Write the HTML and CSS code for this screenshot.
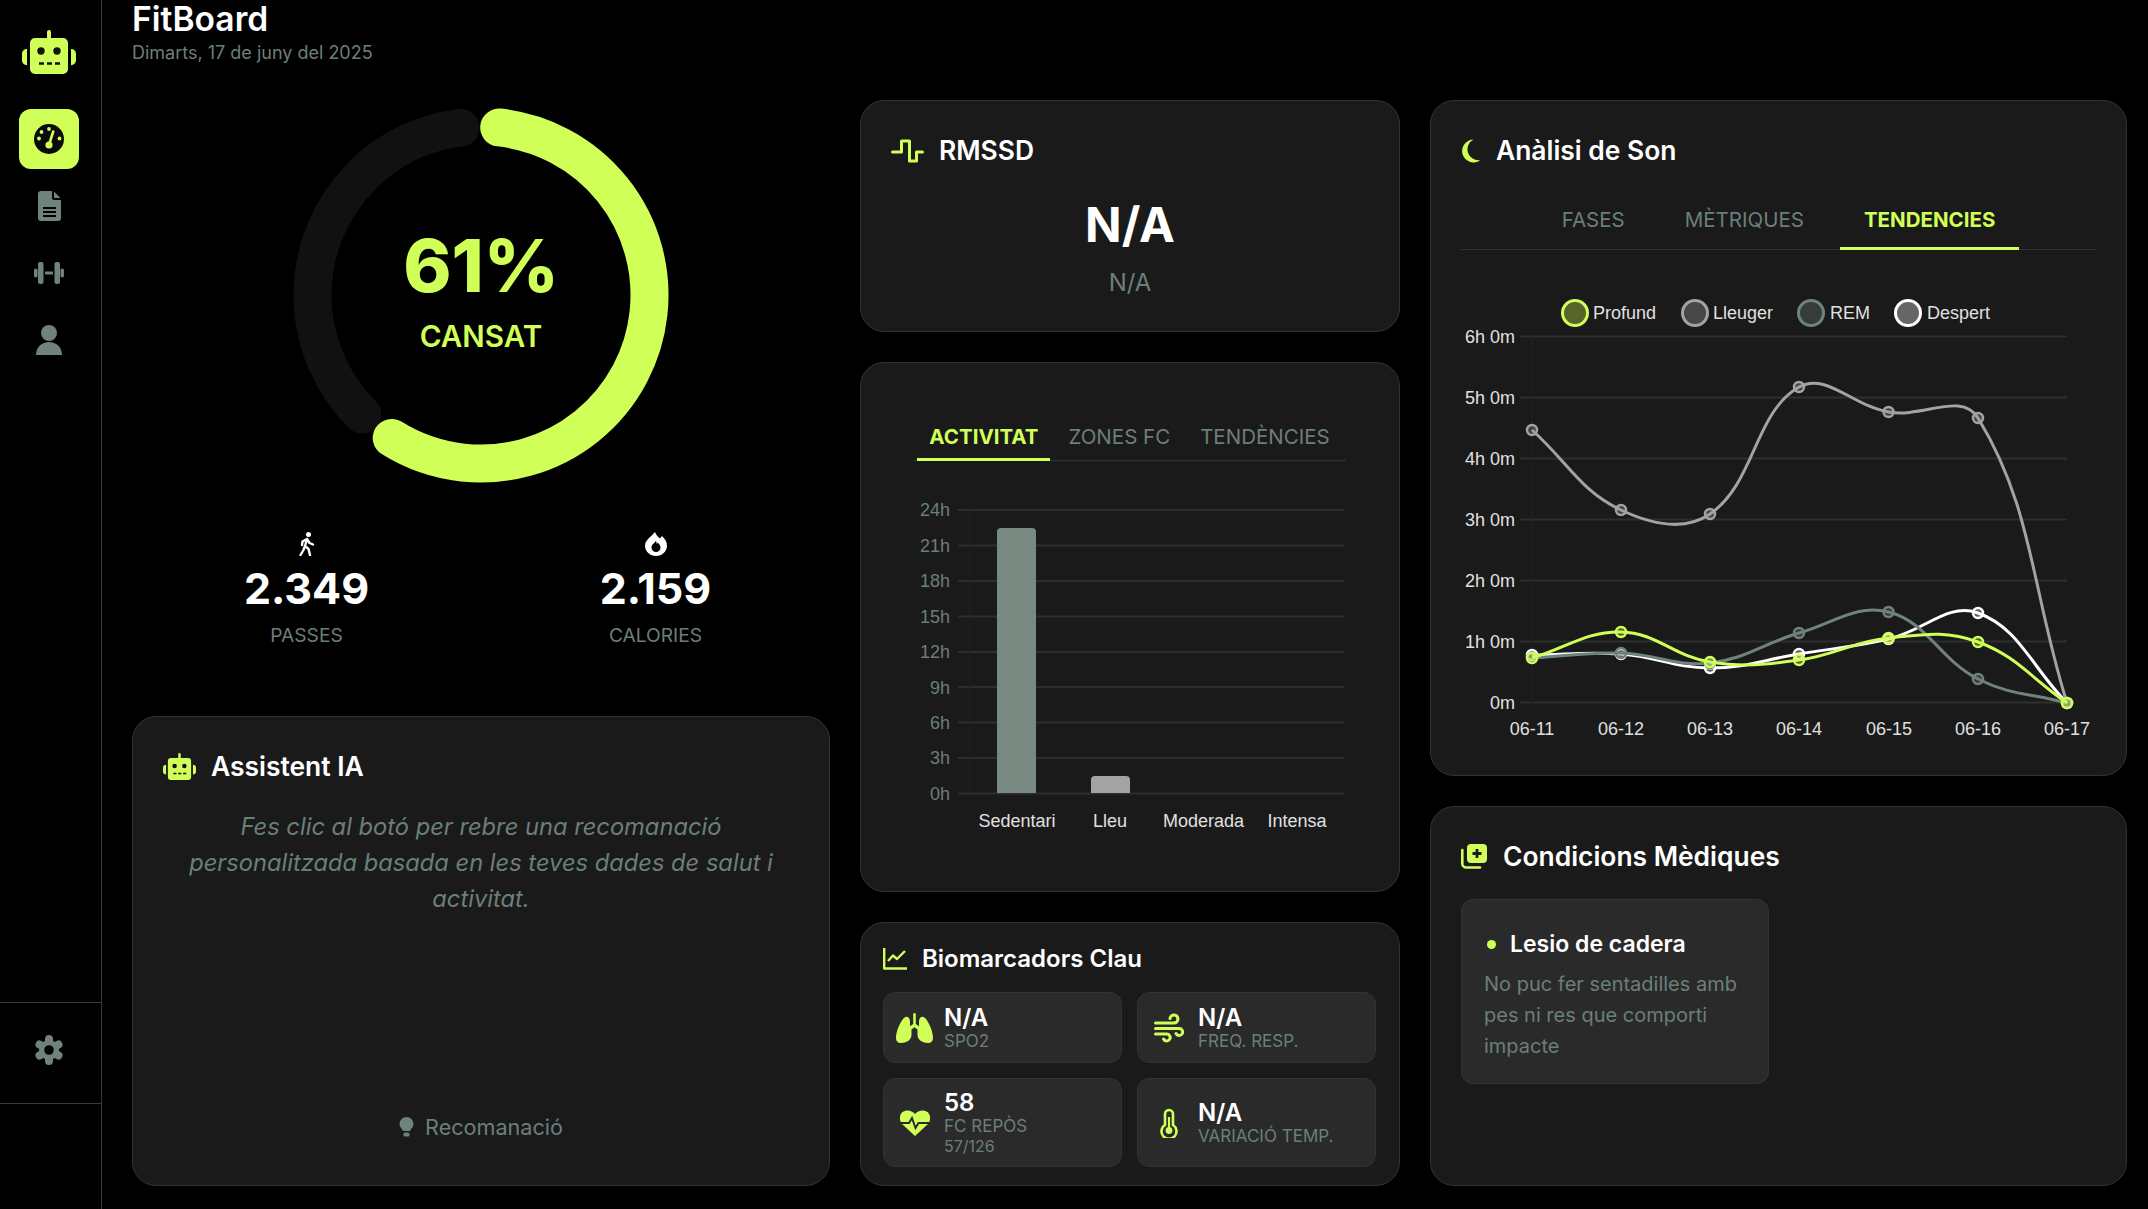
FILE: index.html
```html
<!DOCTYPE html>
<html lang="ca">
<head>
<meta charset="utf-8">
<title>FitBoard</title>
<link rel="stylesheet" href="styles.css">
</head>
<body>
<div class="app">
  <aside class="sidebar">
    <div class="logo">
      <svg class="ico-logo" viewBox="0 0 54 44"><use href="#i-robot"/></svg>
    </div>
    <nav class="nav">
      <a class="nav-item active">
        <svg width="30" height="30" viewBox="0 0 30 30"><circle cx="15" cy="15" r="15" fill="#0a0a0a"/><g fill="#d0ff58"><circle cx="15" cy="5" r="1.9"/><circle cx="7.5" cy="8" r="1.9"/><circle cx="5" cy="14.5" r="1.9"/><circle cx="25.5" cy="14.5" r="1.9"/><circle cx="15" cy="21" r="3.6"/></g><path d="M15 21 19.2 7.5" stroke="#d0ff58" stroke-width="2.6" stroke-linecap="round"/></svg>
      </a>
      <a class="nav-item">
        <svg width="24" height="30" viewBox="0 0 24 30"><path class="f-muted" d="M4 0H15V7A2 2 0 0 0 17 9H24V27A3 3 0 0 1 21 30H4A3 3 0 0 1 1 27V3A3 3 0 0 1 4 0Z"/><path class="f-muted" d="M17 .5 23.5 7H17Z"/><path d="M6 17H19M6 21H19M6 25H19" stroke="#000" stroke-width="2"/></svg>
      </a>
      <a class="nav-item">
        <svg width="30" height="22" viewBox="0 0 30 22"><g class="f-muted"><rect x="0" y="6.5" width="3.5" height="9" rx="1.7"/><rect x="4" y="0" width="5.5" height="22" rx="2"/><rect x="20.500" y="0" width="5.5" height="22" rx="2"/><rect x="26.500" y="6.500" width="3.500" height="9" rx="1.700"/><rect x="11" y="9.500" width="8" height="3"/></g></svg>
      </a>
      <a class="nav-item">
        <svg width="26" height="30" viewBox="0 0 26 30"><g class="f-muted"><circle cx="13" cy="8" r="8"/><path d="M0 30C0 22 6 17 13 17S26 22 26 30Z"/></g></svg>
      </a>
    </nav>
    <div class="side-foot">
      <svg width="30" height="30" viewBox="0 0 30 30"><g stroke="#6f827c" stroke-width="8" stroke-linecap="round"><path d="M15 4V26M5.500 9.500 24.500 20.500M24.500 9.500 5.500 20.500"/></g><circle cx="15" cy="15" r="10" fill="#6f827c"/><circle cx="15" cy="15" r="4.800" fill="#000"/></svg>
    </div>
  </aside>

  <main class="main">
    <header class="header">
      <h1 class="brand">FitBoard</h1>
      <p class="date">Dimarts, 17 de juny del 2025</p>
    </header>

    <div class="grid">
      <section class="col">
        <div class="summary">
          <div class="gauge">
            <svg class="gauge-svg" viewBox="0 0 376 376">
              <circle class="g-track" cx="188" cy="188" r="168.5" pathLength="360" stroke-dasharray="128.2 360" transform="rotate(134.8 188 188)"/>
              <circle class="g-value" cx="188" cy="188" r="168.5" pathLength="360" stroke-dasharray="205.8 360" transform="rotate(-83.8 188 188)"/>
            </svg>
            <div class="gauge-text">
              <div class="gauge-num">61%</div>
              <div class="gauge-label">CANSAT</div>
            </div>
          </div>
          <div class="stats">
            <div class="stat">
              <svg width="16" height="24" viewBox="0 0 16 24"><circle cx="9.500" cy="2.500" r="2.500" fill="#fff"/><path d="M8 7 6 14 9.500 17 11 23M6 14 4.500 18 1.500 23M8 7 3.500 9.500 3 13M8 7 10.500 11 14 12.500" fill="none" stroke="#fff" stroke-width="2.400" stroke-linecap="round" stroke-linejoin="round"/></svg>
              <div class="stat-num">2.349</div>
              <div class="stat-label">PASSES</div>
            </div>
            <div class="stat">
              <svg width="22" height="24" viewBox="0 0 22 24"><path fill="#fff" fill-rule="evenodd" d="M10 0C11 3 13 5 15 6.500L17 4C20 7 22 10 22 13.500 22 19.500 17 24 11 24S0 19.500 0 13.500C0 8 6 5 10 0ZM11 8.500C10 11 6.500 12 6.500 15.500A4.500 4.500 0 0 0 15.500 15.500C15.500 13 14 12.500 13 10.500L11.800 12Z"/></svg>
              <div class="stat-num">2.159</div>
              <div class="stat-label">CALORIES</div>
            </div>
          </div>
        </div>

        <div class="card card-ai">
          <h2 class="card-title">
            <svg width="33" height="27" viewBox="0 0 54 44"><use href="#i-robot"/></svg>
            Assistent IA
          </h2>
          <p class="ai-text">Fes clic al botó per rebre una recomanació personalitzada basada en les teves dades de salut i activitat.</p>
          <div class="ai-action">
            <svg width="15" height="20" viewBox="0 0 15 20"><path class="f-muted" d="M7.500 0A7 7 0 0 1 14.500 7C14.500 10 12 11.500 11 14H4C3 11.500 .5 10 .5 7A7 7 0 0 1 7.500 0Z"/><rect class="f-muted" x="4.500" y="15.500" width="6" height="4" rx="1.500"/></svg>
            <span>Recomanació</span>
          </div>
        </div>
      </section>

      <section class="col">
        <div class="card card-rmssd">
          <h2 class="card-title">
            <svg width="33" height="24" viewBox="0 0 32 24"><path d="M1 13H10V2H18V22H25V13H31" fill="none" stroke="#d0ff58" stroke-width="3" stroke-linecap="round" stroke-linejoin="round"/></svg>
            RMSSD
          </h2>
          <div class="big-val">N/A</div>
          <div class="big-sub">N/A</div>
        </div>

        <div class="card card-activity">
          <div class="tabs tabs-small">
            <span class="tab on">ACTIVITAT</span>
            <span class="tab">ZONES FC</span>
            <span class="tab">TENDÈNCIES</span>
          </div>
          <svg class="chart-bar" viewBox="891 470 478 370">
            <g class="grid-lines">
              <path d="M958 511H1344M958 546.500H1344M958 582H1344M958 617.500H1344M958 653H1344M958 688H1344M958 723.500H1344M958 759H1344M958 794.500H1344"/>
            </g>
            <path class="axis-faint" d="M970 511V794"/>
            <g class="t-muted">
              <text x="950" y="517">24h</text><text x="950" y="552.500">21h</text><text x="950" y="588">18h</text>
              <text x="950" y="623.500">15h</text><text x="950" y="659">12h</text><text x="950" y="694.500">9h</text>
              <text x="950" y="730">6h</text><text x="950" y="765">3h</text><text x="950" y="801">0h</text>
            </g>
            <path fill="#778980" d="M997 794V533A4 4 0 0 1 1001 529H1032A4 4 0 0 1 1036 533V794Z"/>
            <path fill="#a3a3a3" d="M1091 794V781A4 4 0 0 1 1095 777H1126A4 4 0 0 1 1130 781V794Z"/>
            <g class="t-light t-mid">
              <text x="1017" y="828">Sedentari</text><text x="1110" y="828">Lleu</text>
              <text x="1203.500" y="828">Moderada</text><text x="1297" y="828">Intensa</text>
            </g>
          </svg>
        </div>

        <div class="card card-bio">
          <h2 class="card-title title-bio">
            <svg width="24" height="22" viewBox="0 0 24 22"><path d="M1.200 0V20.500H24M5 13 10 7.500 14 11 22 3" fill="none" stroke="#d0ff58" stroke-width="2.400" stroke-linejoin="round"/></svg>
            Biomarcadors Clau
          </h2>
          <div class="bio-grid">
            <div class="bio">
              <span class="bio-ico"><svg width="37" height="30" viewBox="0 0 37 30"><path fill="#d0ff58" d="M18.500 0C19.300 0 19.800 .6 19.800 1.300V11L23 13.300V8.500C23 4.500 26 2.500 28.500 4.500 32.500 8 37 18 37 25 37 28 35 30 32 30 27 30 21.500 27 21.500 22V16.500L18.500 14.300 15.500 16.500V22C15.500 27 10 30 5 30 2 30 0 28 0 25 0 18 4.500 8 8.500 4.500 11 2.500 14 4.500 14 8.500V13.300L17.200 11V1.300C17.200 .6 17.700 0 18.500 0Z"/></svg></span>
              <div class="bio-text"><div class="bio-val">N/A</div><div class="bio-lab">SPO2</div></div>
            </div>
            <div class="bio">
              <span class="bio-ico"><svg width="30" height="30" viewBox="0 0 30 30"><path d="M1.500 10H20A4 4 0 1 0 16 5.500M1.500 15.500H25.500A3.500 3.500 0 1 1 22 20.500M1.500 21H13A3.500 3.500 0 1 1 9.500 26" fill="none" stroke="#d0ff58" stroke-width="3" stroke-linecap="round"/></svg></span>
              <div class="bio-text"><div class="bio-val">N/A</div><div class="bio-lab">FREQ. RESP.</div></div>
            </div>
            <div class="bio">
              <span class="bio-ico"><svg width="30" height="26" viewBox="0 0 30 26"><path fill="#d0ff58" d="M15 26 2 14C-1.500 10-.5 4 3 1.800 7-.8 12 .5 15 4 18 .5 23-.8 27 1.800 30.500 4 31.500 10 28 14Z"/><path d="M0 13H9L12 8 15.500 18 18.500 13H30" fill="none" stroke="#2a2a2a" stroke-width="2"/></svg></span>
              <div class="bio-text"><div class="bio-val">58</div><div class="bio-lab">FC REPÒS</div><div class="bio-sm">57/126</div></div>
            </div>
            <div class="bio">
              <span class="bio-ico"><svg width="18" height="30" viewBox="0 0 18 30"><path d="M5 17V6A4 4 0 0 1 13 6V17A7.500 7.500 0 1 1 5 17Z" fill="none" stroke="#d0ff58" stroke-width="2.600"/><circle cx="9" cy="22.500" r="3.400" fill="#d0ff58"/><path d="M9 22V9" stroke="#d0ff58" stroke-width="2.200"/></svg></span>
              <div class="bio-text"><div class="bio-val">N/A</div><div class="bio-lab">VARIACIÓ TEMP.</div></div>
            </div>
          </div>
        </div>
      </section>

      <section class="col">
        <div class="card card-sleep">
          <h2 class="card-title">
            <svg width="20" height="24" viewBox="0 0 21 24"><path fill="#d0ff58" d="M13 0A12 12 0 1 0 20.500 21.500 11.500 11.500 0 0 1 13 0Z"/></svg>
            Anàlisi de Son
          </h2>
          <div class="tabs tabs-wide">
            <span class="tab">FASES</span>
            <span class="tab">MÈTRIQUES</span>
            <span class="tab on">TENDENCIES</span>
          </div>
          <svg class="chart-line" id="sleepChart" viewBox="1461 260 636 490">
            <g class="legend">
              <circle cx="1575" cy="313" r="12.500" fill="#58652a" stroke="#d0ff58"/><text x="1593" y="319">Profund</text>
              <circle cx="1695" cy="313" r="12.500" fill="#474747" stroke="#a3a3a3"/><text x="1713" y="319">Lleuger</text>
              <circle cx="1811" cy="313" r="12.500" fill="#343d3b" stroke="#6f827c"/><text x="1830" y="319">REM</text>
              <circle cx="1908" cy="313" r="12.500" fill="#666" stroke="#fff"/><text x="1927" y="319">Despert</text>
            </g>
            <g class="grid-lines">
              <path d="M1520 336.500H2067M1520 397.500H2067M1520 458.500H2067M1520 519.500H2067M1520 580.500H2067M1520 641.500H2067M1520 702.500H2067"/>
            </g>
            <path class="axis-faint" d="M1532 336V703"/>
            <g class="t-muted t-white">
              <text x="1515" y="343">6h 0m</text><text x="1515" y="403.500">5h 0m</text><text x="1515" y="464.500">4h 0m</text>
              <text x="1515" y="525.500">3h 0m</text><text x="1515" y="586.500">2h 0m</text><text x="1515" y="647.500">1h 0m</text>
              <text x="1515" y="708.500">0m</text>
            </g>
            <g class="t-light t-mid">
              <text x="1532" y="735">06-11</text><text x="1621" y="735">06-12</text><text x="1710" y="735">06-13</text>
              <text x="1799" y="735">06-14</text><text x="1889" y="735">06-15</text><text x="1978" y="735">06-16</text>
              <text x="2067" y="735">06-17</text>
            </g>
            <g id="sleepSeries"></g>
          </svg>
        </div>

        <div class="card card-med">
          <h2 class="card-title title-med">
            <svg width="26" height="25" viewBox="0 0 26 25"><path fill="#d0ff58" d="M10 0H22A4 4 0 0 1 26 4V15A4 4 0 0 1 22 19H10A4 4 0 0 1 6 15V4A4 4 0 0 1 10 0Z"/><path d="M16 5V14M11.500 9.500H20.500" stroke="#1a1a1a" stroke-width="2.800"/><path d="M1.300 6V19.500A4 4 0 0 0 5.300 23.500H19" fill="none" stroke="#d0ff58" stroke-width="2.600" stroke-linecap="round"/></svg>
            Condicions Mèdiques
          </h2>
          <div class="cond">
            <div class="cond-head"><i class="dot"></i>Lesio de cadera</div>
            <p class="cond-text">No puc fer sentadilles amb pes ni res que comporti impacte</p>
          </div>
        </div>
      </section>
    </div>
  </main>
</div>

<svg class="defs" width="0" height="0">
  <symbol id="i-robot" viewBox="0 0 54 44">
    <path fill="#d0ff58" d="M27 0A2 2 0 0 1 29 2V8H41A5 5 0 0 1 46 13V39A5 5 0 0 1 41 44H13A5 5 0 0 1 8 39V13A5 5 0 0 1 13 8H25V2A2 2 0 0 1 27 0Z"/>
    <path fill="#d0ff58" d="M5 19V35C2 35 0 33 0 30V24C0 21 2 19 5 19ZM49 19C52 19 54 21 54 24V30C54 33 52 35 49 35Z"/>
    <circle cx="19" cy="21" r="3.700" fill="#111"/><circle cx="35" cy="21" r="3.700" fill="#111"/>
    <path d="M17 33.500H22M25 33.500H30M33 33.500H38" stroke="#111" stroke-width="2.400"/>
  </symbol>
</svg>
<script src="chart.js"></script>
</body>
</html>
```
FILE: styles.css
```css
* { box-sizing: border-box; }
html, body { margin: 0; height: 100%; background: #000; overflow: hidden; }
body { font-family: Inter, "Liberation Sans", sans-serif; color: #fff; }
h1, h2, p { margin: 0; }
.defs { position: absolute; }
.f-muted { fill: #6f827c; }

.app { display: flex; height: 1209px; }

.sidebar { width: 102px; flex: none; border-right: 1px solid #3a3a3a; display: flex; flex-direction: column; align-items: stretch; }
.logo { height: 109px; padding: 30px 3px 0 0; display: flex; justify-content: center; }
.ico-logo { width: 54px; height: 44px; }
.nav { flex: 1; display: flex; flex-direction: column; align-items: center; padding-right: 3px; }
.nav-item { height: 67px; width: 60px; display: flex; align-items: center; justify-content: center; }
.nav-item.active { height: 60px; background: #d0ff58; border-radius: 12px; margin-bottom: 3px; }
.side-foot { height: 102px; margin-bottom: 105px; padding: 0 3px 7px 0; border-top: 1px solid #3a3a3a; border-bottom: 1px solid #3a3a3a; display: flex; align-items: center; justify-content: center; }

.main { flex: 1; min-width: 0; padding: 0 21px 0 30px; }
.header { height: 100px; }
.brand { font-size: 33.6px; line-height: 38px; font-weight: 600; }
.date { margin-top: 3px; font-size: 18px; line-height: 24px; color: #6b7f7a; }

.grid { display: grid; grid-template-columns: 698px 540px 697px; column-gap: 30px; }
.col { display: flex; flex-direction: column; gap: 30px; }

.card { background: #1a1a1a; border: 1px solid #333; border-radius: 24px; padding: 30px; }
.card-title { display: flex; align-items: center; gap: 15px; font-size: 26.4px; line-height: 39px; font-weight: 600; }

.summary { height: 586px; padding-top: 7px; }
.gauge { position: relative; width: 376px; height: 376px; margin: 0 auto; }
.gauge-svg { display: block; width: 376px; height: 376px; }
.g-track { fill: none; stroke: #111; stroke-width: 38; stroke-linecap: round; }
.g-value { fill: none; stroke: #d0ff58; stroke-width: 38; stroke-linecap: round; }
.gauge-text { position: absolute; inset: 0; text-align: center; color: #d0ff58; }
.gauge-num { margin-top: 116px; font-size: 73px; line-height: 86px; font-weight: 800; }
.gauge-label { margin-top: 10px; font-size: 29.6px; line-height: 34px; font-weight: 600; }

.stats { display: grid; grid-template-columns: 1fr 1fr; margin-top: 49px; }
.stat { display: flex; flex-direction: column; align-items: center; }
.stat svg { display: block; height: 24px; }
.stat-num { margin-top: 7px; font-size: 43px; line-height: 50px; font-weight: 700; color: #fff; }
.stat-label { margin-top: 10px; font-size: 19.2px; line-height: 24px; color: #6b7f7a; }

.card-ai { height: 470px; display: flex; flex-direction: column; }
.ai-text { margin-top: 23px; flex: 1; text-align: center; font-style: italic; font-size: 23.7px; line-height: 36px; color: #6b7f7a; }
.ai-action { display: flex; justify-content: center; align-items: center; gap: 11px; height: 30px; margin-bottom: 13px; font-size: 21.6px; color: #6b7f7a; }

.card-rmssd { height: 232px; }
.big-val { margin-top: 26px; text-align: center; font-size: 48px; line-height: 58px; font-weight: 700; }
.big-sub { margin-top: 14px; text-align: center; font-size: 24px; line-height: 30px; color: #6b7f7a; }

.card-activity { height: 530px; }
.tabs { display: flex; justify-content: center; border-bottom: 1px solid #333; }
.tab { font-size: 20.5px; line-height: 24px; color: #6b7f7a; margin-bottom: -1px; border-bottom: 3px solid transparent; }
.tab.on { color: #d0ff58; font-weight: 700; border-bottom-color: #d0ff58; }
.tabs-small { margin: 20px 23px 0 22px; gap: 6px; }
.tabs-small .tab { padding: 12px 12px 9px; }
.tabs-wide { margin-top: 21px; gap: 12px; }
.tabs-wide .tab { padding: 17px 24px 15px; }
.chart-bar { display: block; width: 478px; height: 370px; margin-top: 8px; }
.chart-line { display: block; width: 636px; height: 490px; margin-top: 10px; }

.grid-lines path { stroke: #2b302e; stroke-width: 2; fill: none; }
.axis-faint { stroke: #222; stroke-width: 1; fill: none; }
.t-muted text { font: 18px "Liberation Sans", Arial, sans-serif; fill: #6b7f7a; text-anchor: end; }
.t-muted.t-white text { fill: #e0e0e0; }
.t-light text { font: 18px "Liberation Sans", Arial, sans-serif; fill: #e0e0e0; }
.t-mid text { text-anchor: middle; }
.legend text { font: 18px "Liberation Sans", Arial, sans-serif; fill: #e0e0e0; }
.legend circle { stroke-width: 3; }
.s-line { fill: none; stroke-width: 3; }
.s-pt { stroke-width: 2.5; }

.card-bio { height: 264px; padding: 21px 23px 0 22px; }
.title-bio { font-size: 24px; line-height: 30px; gap: 15px; }
.bio-grid { display: grid; grid-template-columns: 1fr 1fr; grid-template-rows: 71px 89px; gap: 15px; margin-top: 18px; }
.bio { background: #2a2a2a; border: 1px solid #333; border-radius: 12px; padding: 0 12px; display: flex; align-items: center; gap: 11px; }
.bio-ico { width: 37px; display: flex; justify-content: center; }
.bio-val { font-size: 24px; line-height: 26px; font-weight: 600; color: #fff; }
.bio-lab { font-size: 17px; line-height: 20px; color: #6b7f7a; }
.bio-sm { font-size: 16px; line-height: 20px; color: #6b7f7a; }

.card-sleep { height: 676px; }
.card-med { height: 380px; }
.title-med { gap: 16px; }
.cond { margin-top: 23px; width: 308px; height: 185px; background: #2a2a2a; border: 1px solid #333; border-radius: 12px; padding: 27px 22px; }
.cond-head { display: flex; align-items: center; font-size: 23px; line-height: 34px; font-weight: 600; }
.dot { width: 9px; height: 9px; border-radius: 50%; background: #d0ff58; margin: 0 14px 0 3px; }
.cond-text { margin-top: 8px; font-size: 20px; line-height: 31px; color: #6b7f7a; }
```
FILE: chart.js
```js
// Draws the sleep trend series as smooth curves (tension 0.4) with point markers.
var X = [1532, 1621, 1710, 1799, 1888.5, 1978, 2067];
var SERIES = [
  { color: '#ffffff', fill: 'rgba(255,255,255,.3)', y: [655, 654, 668, 654, 639, 613, 703] },
  { color: '#6f827c', fill: 'rgba(111,130,124,.3)', y: [658, 653, 663, 633, 612, 679, 703] },
  { color: '#a3a3a3', fill: 'rgba(163,163,163,.3)', y: [430, 510, 514, 387, 412, 418, 703] },
  { color: '#d0ff58', fill: 'rgba(208,255,88,.3)', y: [658, 632, 662, 660, 638, 642, 703] }
];
var NS = 'http://www.w3.org/2000/svg';
var root = document.getElementById('sleepSeries');

function dist(a, b) { return Math.hypot(a[0] - b[0], a[1] - b[1]); }

function curve(pts) {
  var t = 0.4, prev = [], next = [];
  pts.forEach(function (p, i) {
    var a = pts[i - 1] || p, b = pts[i + 1] || p;
    var d1 = dist(a, p), d2 = dist(p, b), s = d1 + d2 || 1;
    prev[i] = [p[0] - t * d1 / s * (b[0] - a[0]), p[1] - t * d1 / s * (b[1] - a[1])];
    next[i] = [p[0] + t * d2 / s * (b[0] - a[0]), p[1] + t * d2 / s * (b[1] - a[1])];
  });
  var d = 'M' + pts[0].join(' ');
  for (var i = 1; i < pts.length; i++) {
    d += 'C' + next[i - 1].join(' ') + ' ' + prev[i].join(' ') + ' ' + pts[i].join(' ');
  }
  return d;
}

SERIES.forEach(function (s) {
  var pts = X.map(function (x, i) { return [x, s.y[i]]; });
  var path = document.createElementNS(NS, 'path');
  path.setAttribute('class', 's-line');
  path.setAttribute('stroke', s.color);
  path.setAttribute('d', curve(pts));
  root.appendChild(path);
  pts.forEach(function (p) {
    var c = document.createElementNS(NS, 'circle');
    c.setAttribute('class', 's-pt');
    c.setAttribute('cx', p[0]);
    c.setAttribute('cy', p[1]);
    c.setAttribute('r', 5);
    c.setAttribute('fill', s.fill);
    c.setAttribute('stroke', s.color);
    root.appendChild(c);
  });
});
```
